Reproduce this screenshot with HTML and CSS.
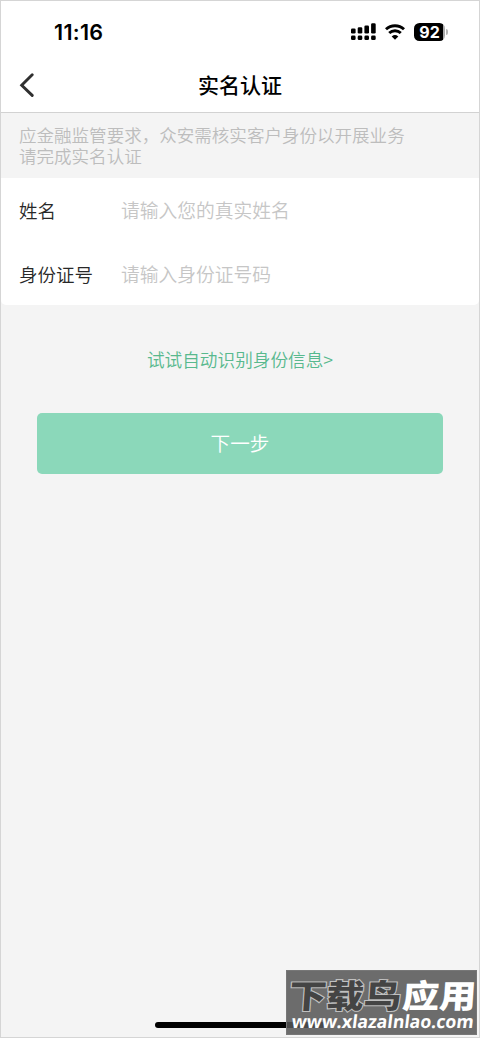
FILE: index.html
```html
<!DOCTYPE html>
<html lang="zh-CN">
<head>
<meta charset="utf-8">
<title>实名认证</title>
<link rel="stylesheet" href="styles.css">
</head>
<body>
<main class="screen">
  <header class="top">
    <div class="status">
      <span class="time">11:16</span>
      <span class="indicators">
        <svg class="signal" width="25" height="18" viewBox="0 0 25 18">
          <rect x="0" y="5.5" width="4.6" height="5" rx="1.3"/><rect x="6.7" y="4.3" width="4.6" height="6.2" rx="1.3"/><rect x="13.4" y="2.5" width="4.6" height="8" rx="1.3"/><rect x="20.1" y="0.3" width="4.6" height="10.2" rx="1.3"/>
          <rect x="0" y="12.5" width="4.6" height="4.6" rx="1.4"/><rect x="6.7" y="12.5" width="4.6" height="4.6" rx="1.4"/><rect x="13.4" y="12.5" width="4.6" height="4.6" rx="1.4"/><rect x="20.1" y="12.5" width="4.6" height="4.6" rx="1.4"/>
        </svg>
        <svg class="wifi" width="20" height="16" viewBox="0 0 20 16">
          <path d="M1 5.2C6 .5 14 .5 19 5.2M4.2 9C7.5 6 12.5 6 15.8 9" fill="none" stroke="#000" stroke-width="2.9"/>
          <path d="M6.7 12.4Q10 9.6 13.3 12.4L10 15.8Z"/>
        </svg>
        <span class="battery"><span class="level">92</span></span><span class="cap"></span>
      </span>
    </div>
    <div class="nav">
      <svg class="back" width="16" height="24" viewBox="0 0 16 24"><path d="M13.2 1.8 2.7 12.2 13.2 22.4" fill="none" stroke="#303030" stroke-width="2.9" stroke-linecap="round"/></svg>
      <h1 class="title">实名认证</h1>
    </div>
  </header>
  <div class="notice"><span>应金融监管要求，众安需核实客户身份以开展业务</span><span>请完成实名认证</span></div>
  <section class="form">
    <div class="row"><span class="label">姓名</span><span class="hint">请输入您的真实姓名</span></div>
    <div class="row"><span class="label">身份证号</span><span class="hint">请输入身份证号码</span></div>
  </section>
  <div class="scan">试试自动识别身份信息&gt;</div>
  <div class="next">下一步</div>
  <div class="home"></div>
  <svg class="watermark" width="191" height="65" viewBox="0 0 191 65">
    <rect width="191" height="65" fill="#555" fill-opacity=".86"/>
    <rect x=".5" y=".5" width="190" height="64" fill="none" stroke="#777"/>
    <g class="brand" transform="translate(2.5 38) skewX(-4) scale(1 .96)">
      <text class="brand-dark" textLength="112" lengthAdjust="spacingAndGlyphs">下载鸟</text>
      <text class="brand-light" x="113" textLength="74" lengthAdjust="spacingAndGlyphs">应用</text>
    </g>
    <text class="url" transform="translate(5 58) skewX(-7)" textLength="182" lengthAdjust="spacingAndGlyphs">www.xlazalnlao.com</text>
  </svg>
</main>
</body>
</html>
```
FILE: styles.css
```css
* { box-sizing: border-box; }
body { margin: 0; font-family: Inter, "Noto Sans CJK SC", sans-serif; }
.screen {
  position: relative;
  display: flex;
  flex-direction: column;
  width: 480px;
  height: 1038px;
  border: 1px solid #d5d5d5;
  background: #f4f4f4;
}
.top { height: 112px; background: #fff; border-bottom: 1px solid #d2d2d2; }
.status { display: flex; justify-content: space-between; align-items: center; height: 63px; padding: 0 31px 0 53px; }
.time { font-size: 21.5px; line-height: 24px; font-weight: 600; letter-spacing: .3px; padding-bottom: 1px; }
.indicators { display: flex; align-items: center; padding-bottom: 1px; }
.wifi { margin-left: 9px; }
.battery {
  display: flex;
  width: 31px;
  height: 18px;
  margin-left: 9px;
  border-radius: 5.5px;
  overflow: hidden;
  background: linear-gradient(90deg, #000 28.5px, #aaa 28.5px);
}
.level { width: 31px; text-align: center; color: #fff; font-size: 16px; line-height: 18px; font-weight: 700; }
.cap { width: 2px; height: 6px; margin-left: 1px; background: #b5b5b5; border-radius: 0 2px 2px 0; }
.nav { display: grid; grid-template-columns: 60px 1fr 60px; align-items: center; height: 41px; }
.back { margin-left: 18px; }
.title { margin: 0; padding-bottom: 2px; text-align: center; font: 500 21px/30px "Noto Sans CJK SC", sans-serif; }
.notice {
  display: flex;
  flex-direction: column;
  height: 65px;
  padding: 11px 18px 0;
  color: #bdbdbd;
  font: 350 17.55px/21px "Noto Sans CJK SC", sans-serif;
  white-space: nowrap;
}
.form { height: 127px; padding: 0 18px; background: #fff; border-radius: 0 0 5px 5px; }
.row { display: flex; align-items: center; height: 64px; padding-bottom: 1px; font: 350 18.75px/28px "Noto Sans CJK SC", sans-serif; }
.label { width: 102px; color: #282828; font-size: 18.5px; }
.hint { color: #c6c6c6; }
.scan { margin-top: 41px; text-align: center; color: #58b98e; font: 350 17.65px/28px "Noto Sans CJK SC", sans-serif; }
.next {
  height: 61px;
  margin: 39px 36px 0;
  border-radius: 5px;
  background: #8bd8ba;
  color: #fff;
  text-align: center;
  font: 350 19.6px/60px "Noto Sans CJK SC", sans-serif;
}
.home { width: 170px; height: 6px; margin: auto auto 9px; border-radius: 3px; background: #000; }
.watermark { position: absolute; left: 285px; top: 969px; }
.brand { font: 900 34px "Noto Sans CJK SC", sans-serif; }
.brand-dark { fill: #444; stroke: #c0c0c0; stroke-width: 2.2px; paint-order: stroke; }
.brand-light { fill: #fff; }
.url { fill: #fff; font: 700 18px "Open Sans", "Noto Sans", sans-serif; }
```
